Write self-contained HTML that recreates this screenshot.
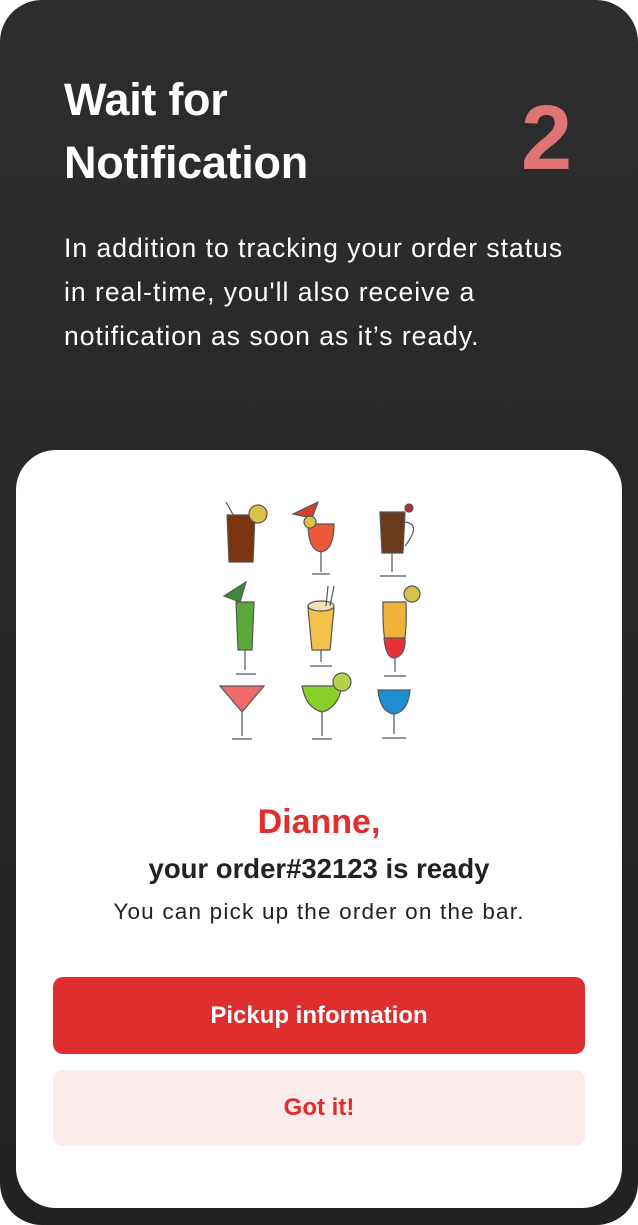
<!DOCTYPE html>
<html><head><style>
*{margin:0;padding:0;box-sizing:border-box}
body{width:638px;height:1225px;background:#fff;font-family:"Liberation Sans",sans-serif;overflow:hidden}
.outer{position:absolute;left:0;top:0;width:638px;height:1225px;border-radius:42px;background:linear-gradient(#2d2d2d,#222);}
h1{position:absolute;left:64px;top:68px;color:#fff;font-size:45px;line-height:63px;font-weight:bold;letter-spacing:-0.3px}
.num{position:absolute;left:521px;top:88px;color:#e07474;font-size:92px;font-weight:bold;line-height:100px}
p.d{position:absolute;left:64px;top:226px;width:570px;white-space:nowrap;color:#fff;font-size:26.5px;line-height:44px;letter-spacing:1px}
.card{position:absolute;left:16px;top:450px;width:606px;height:758px;background:#fff;border-radius:40px}
.t{position:absolute;left:0;width:638px;text-align:center}
.btn{position:absolute;left:53px;width:532px;height:77px;border-radius:10px;text-align:center;line-height:77px;font-size:24px;font-weight:bold}
</style></head><body>
<div class="outer"></div>
<h1>Wait for<br>Notification</h1>
<div class="num">2</div>
<p class="d">In addition to tracking your order status<br>in real-time, you'll also receive a<br>notification as soon as it’s ready.</p>
<div class="card"></div>
<svg style="position:absolute;left:200px;top:490px" width="240" height="260" viewBox="0 0 240 260">
<g stroke="#555" stroke-width="1.2">
<line x1="26" y1="12" x2="36" y2="30"/>
<path d="M27 25 L29 72 L53 72 L55 25Z" fill="#7a3510"/>
<circle cx="58" cy="24" r="9" fill="#d9c049"/>
<path d="M108 34 Q108 60 121 62 Q134 60 134 34Z" fill="#ea5a3a"/>
<path d="M121 62 L121 82 M112 84 L130 84"/>
<path d="M93 24 L118 12 L112 28Z" fill="#d8402a"/>
<circle cx="110" cy="32" r="6" fill="#d9c049"/>
<path d="M180 22 L182 63 L203 63 L205 22Z" fill="#6a3a1a"/>
<path d="M205 32 Q222 34 205 56" fill="none"/>
<path d="M192 63 L192 82 M180 86 L206 86"/>
<circle cx="209" cy="18" r="4" fill="#b3302a"/>
<path d="M36 112 L38 160 L52 160 L54 112Z" fill="#5aa83a"/>
<path d="M45 160 L45 180 M36 184 L56 184"/>
<path d="M24 106 L46 92 L40 112Z" fill="#3a8a3a"/>
<path d="M108 118 L112 160 L130 160 L134 118Z" fill="#f2c24a"/>
<ellipse cx="121" cy="116" rx="13" ry="5" fill="#f3e3b6"/>
<path d="M121 160 L121 172 M110 176 L132 176"/>
<line x1="128" y1="96" x2="126" y2="116"/><line x1="134" y1="96" x2="130" y2="116"/>
<path d="M183 112 Q182 165 194 168 Q208 165 206 112Z" fill="#f1b23a"/>
<path d="M184 148 Q186 168 194 168 Q206 166 205 148Z" fill="#e8303a"/>
<path d="M195 168 L195 182 M184 186 L206 186"/>
<circle cx="212" cy="104" r="8" fill="#d9c049"/>
<path d="M20 196 L64 196 L42 222Z" fill="#ef6a6a"/>
<path d="M42 222 L42 246 M32 249 L52 249"/>
<path d="M102 196 L142 196 Q138 218 122 222 Q106 218 102 196Z" fill="#8ad02a"/>
<path d="M122 222 L122 246 M112 249 L132 249"/>
<circle cx="142" cy="192" r="9" fill="#b5d04a"/>
<path d="M178 200 L210 200 Q208 222 194 224 Q180 222 178 200Z" fill="#1f8ed0"/>
<path d="M194 224 L194 244 M182 248 L206 248"/>
</g>
</svg>
<div class="t" style="top:800px;color:#e02e2e;font-size:34px;font-weight:bold;line-height:44px">Dianne,</div>
<div class="t" style="top:852px;color:#222;font-size:27.5px;font-weight:bold;line-height:34px">your order#32123 is ready</div>
<div class="t" style="top:897px;color:#222;font-size:22.5px;line-height:30px;letter-spacing:1.2px">You can pick up the order on the bar.</div>
<div class="btn" style="top:977px;background:#e02d2d;color:#fff">Pickup information</div>
<div class="btn" style="top:1070px;background:#fcebeb;color:#e02d2d;height:76px;line-height:76px">Got it!</div>
</body></html>
